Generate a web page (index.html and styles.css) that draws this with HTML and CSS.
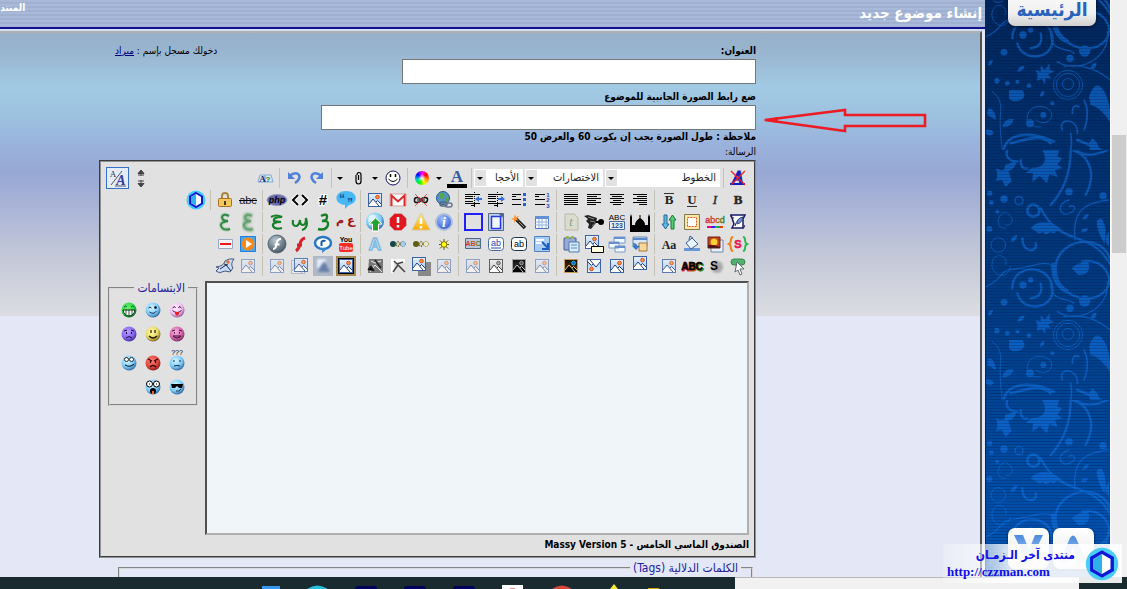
FILE: index.html
```
<!DOCTYPE html>
<html lang="ar" dir="rtl">
<head>
<meta charset="utf-8">
<title>إنشاء موضوع جديد</title>
<link rel="stylesheet" href="styles.css">
</head>
<body>
<svg class="defs" aria-hidden="true">
  <defs>
    <linearGradient id="sky" x1="0" y1="0" x2="0" y2="1"><stop offset="0" stop-color="#e8f2ff"/><stop offset="1" stop-color="#9cc4f4"/></linearGradient>
    <radialGradient id="fBlue" cx=".4" cy=".35" r=".7"><stop offset="0" stop-color="#d8f6ff"/><stop offset=".6" stop-color="#7cccf8"/><stop offset="1" stop-color="#285a98"/></radialGradient>
    <radialGradient id="fGreen" cx=".4" cy=".35" r=".7"><stop offset="0" stop-color="#70f070"/><stop offset=".6" stop-color="#30d848"/><stop offset="1" stop-color="#086018"/></radialGradient>
    <radialGradient id="fPink" cx=".4" cy=".35" r=".7"><stop offset="0" stop-color="#fff0ff"/><stop offset=".6" stop-color="#f4c0f4"/><stop offset="1" stop-color="#884890"/></radialGradient>
    <radialGradient id="fRose" cx=".4" cy=".35" r=".7"><stop offset="0" stop-color="#f8b0e0"/><stop offset=".6" stop-color="#d868b0"/><stop offset="1" stop-color="#702858"/></radialGradient>
    <radialGradient id="fYellow" cx=".4" cy=".35" r=".7"><stop offset="0" stop-color="#fffcb0"/><stop offset=".6" stop-color="#e8d860"/><stop offset="1" stop-color="#685820"/></radialGradient>
    <radialGradient id="fPurple" cx=".4" cy=".35" r=".7"><stop offset="0" stop-color="#b8a0ff"/><stop offset=".6" stop-color="#8868f0"/><stop offset="1" stop-color="#402890"/></radialGradient>
    <radialGradient id="fRed" cx=".4" cy=".35" r=".7"><stop offset="0" stop-color="#ff8070"/><stop offset=".6" stop-color="#e04840"/><stop offset="1" stop-color="#801818"/></radialGradient>
    <radialGradient id="steel" cx=".4" cy=".3" r=".7"><stop offset="0" stop-color="#b8c8d4"/><stop offset="1" stop-color="#485864"/></radialGradient>
    <radialGradient id="info" cx=".4" cy=".3" r=".8"><stop offset="0" stop-color="#a0c0ff"/><stop offset="1" stop-color="#2850d0"/></radialGradient>
    <linearGradient id="warn" x1="0" y1="0" x2="0" y2="1"><stop offset="0" stop-color="#fff080"/><stop offset="1" stop-color="#ffa800"/></linearGradient>
    <linearGradient id="rain"><stop offset="0" stop-color="#e02060"/><stop offset=".5" stop-color="#d85010"/><stop offset="1" stop-color="#209030"/></linearGradient>
    <linearGradient id="btnBlue" x1="0" y1="0" x2="0" y2="1"><stop offset="0" stop-color="#4a8ae0"/><stop offset="1" stop-color="#b4cff0"/></linearGradient>
    <filter id="soft" x="-20%" y="-20%" width="140%" height="140%"><feGaussianBlur stdDeviation="1.3"/></filter>
    <symbol id="pic" viewBox="0 0 20 20">
      <rect x="3.500" y="3.500" width="13" height="13" fill="url(#sky)" stroke="#3c62a8"/>
      <path d="M4 16v-3l4-4 3 3 1.500-1.500 3.500 4V16z" fill="#fff"/><path d="M4 14l4-5 6 7M11 12l1.500-1.500 4 4" fill="none" stroke="#203c78"/>
      <circle cx="12.500" cy="7" r="1.800" fill="#f8a040" stroke="#d04818"/>
    </symbol>
    <symbol id="caret" viewBox="0 0 10 20"><path d="M2 9h6l-3 3z" fill="#000"/></symbol>
    <symbol id="hexa" viewBox="0 0 40 40">
      <circle cx="20" cy="20" r="19" fill="#48ccf8"/><path d="M20 6l12 7v14l-12 7-12-7V13z" fill="#fff" stroke="#1018d8" stroke-width="4"/><path d="M20 8v24l-10-6V14z" fill="#30b0e8"/>
    </symbol>
  </defs>
</svg>

<div class="browser">
  <main class="page">
    <header class="title-bar">
      <h1>إنشاء موضوع جديد</h1>
      <span class="crumb">المنتدى</span>
    </header>
    <div class="panel">
      <form class="form">
        <div class="field-head">
          <label class="strong" for="subject">العنوان:</label>
          <span class="login">دخولك مسجل بإسم : <a href="#user">ميراد</a></span>
        </div>
        <input class="text short" id="subject" type="text">
        <label class="strong second" for="image">ضع رابط الصورة الجانبية للموضوع</label>
        <div class="pointed">
          <input class="text long" id="image" type="text">
          <svg class="pointer" viewBox="0 0 166 26" aria-hidden="true"><path d="M3 13L83 3v5h80v11H83v5z" fill="none" stroke="#ed1c24" stroke-width="2.600"/><path d="M1 13l15-3v6z" fill="#ed1c24"/></svg>
        </div>
        <p class="note">ملاحظة : طول الصورة يجب إن يكوت 60 والعرض 50</p>
        <label class="message" for="body">الرسالة:</label>

        <section class="editor">
          <div class="row">
            <button type="button" class="tool" aria-label="إزالة التنسيق"><svg viewBox="0 0 20 20"><text x="10" y="16" class="g serif bold slant" font-size="18" fill="#1020c0" stroke="#1020c0">A</text><path d="M2 16h15" stroke="#1020c0" stroke-width="2"/><path d="M3 3l14 14M17 3L3 17" stroke="#f02020" stroke-width="1.300"/></svg></button>
            <i class="sep"></i>
            <span class="pick fonts"><select aria-label="الخطوط"><option>الخطوط</option></select></span>
            <span class="pick short-cuts"><select aria-label="الاختصارات"><option>الاختصارات</option></select></span>
            <span class="pick sizes"><select aria-label="الأحجام"><option>الأحجا</option></select></span>
            <i class="sep"></i>
            <button type="button" class="tool" aria-label="لون الخط"><svg viewBox="0 0 20 20"><text x="10" y="14" class="g serif bold" font-size="17" fill="#305a9c">A</text><path d="M0 16h20v4H0z"/></svg></button>
            <button type="button" class="drop" aria-label="الألوان"><svg viewBox="0 0 10 20"><use href="#caret"/></svg></button>
            <button type="button" class="tool" aria-label="ألوان متدرجة"><i class="wheel"></i></button>
            <i class="sep"></i>
            <button type="button" class="tool" aria-label="ابتسامة"><svg viewBox="0 0 20 20"><circle cx="10" cy="10" r="7" fill="#fff" stroke="#101060"/><path d="M7.500 6v3M12.500 6v3" stroke="#000" stroke-width="1.500"/><path d="M5.500 11q4.500 5 9 0" fill="none" stroke="#000"/></svg></button>
            <button type="button" class="drop" aria-label="المزيد من الابتسامات"><svg viewBox="0 0 10 20"><use href="#caret"/></svg></button>
            <button type="button" class="tool" aria-label="مرفق"><svg viewBox="0 0 20 20"><path d="M8 7v6q0 3 2.500 3t2.500-3V7q0-2.500-2-2.500T9 7M10.500 7v5" fill="none" stroke="#000" stroke-width="1.200"/></svg></button>
            <button type="button" class="drop" aria-label="المرفقات"><svg viewBox="0 0 10 20"><use href="#caret"/></svg></button>
            <i class="sep"></i>
            <button type="button" class="tool" aria-label="إعادة"><svg viewBox="0 0 20 20"><path d="M15 8Q8 3 5 7q-2 4 4 8" fill="none" stroke="#5080d8" stroke-width="2.500"/><path d="M16 4v7H9z" fill="#5080d8"/></svg></button>
            <button type="button" class="tool" aria-label="تراجع"><svg viewBox="0 0 20 20"><path d="M5 8q7-5 10-1 2 4-4 8" fill="none" stroke="#5080d8" stroke-width="2.500"/><path d="M4 4v7h7z" fill="#5080d8"/></svg></button>
            <i class="sep"></i>
            <button type="button" class="tool" aria-label="تبديل اللغة"><svg viewBox="0 0 20 20"><path d="M3 14l2-7h5v7zM10 7h6l2 7h-8z" fill="#d8e8f8" stroke="#88a8d0"/><text x="7.500" y="14" class="g serif bold" font-size="9" fill="#202870">A</text><text x="13" y="14" class="g bold" font-size="8" fill="#208030">?</text></svg></button>
            <span class="push"></span>
            <button type="button" class="tool" aria-label="حجم الصندوق"><svg viewBox="0 0 20 20"><path d="M10 2l3 3.500H7zM7 7h6M10 5v3M10 19l3-3.500H7zM7 13h6M10 12v4" stroke="#444" fill="#444"/></svg></button>
            <button type="button" class="tool mode" aria-label="تبديل المحرر"><svg viewBox="0 0 20 20"><text x="5" y="9" class="g serif" font-size="9" fill="#333">A</text><text x="13" y="17" class="g serif bold slant" font-size="14" fill="#3838a0">A</text><path d="M3 17L14 3M7 18h11" stroke="#556"/></svg></button>
          </div>

          <div class="row">
            <button type="button" class="tool" aria-label="غامق"><svg viewBox="0 0 20 20"><text x="10" y="14" class="g serif bold" font-size="13" fill="#222" stroke="#333" stroke-width=".5">B</text></svg></button>
            <button type="button" class="tool" aria-label="مائل"><svg viewBox="0 0 20 20"><text x="10" y="14" class="g serif slant" font-size="13" fill="#222" stroke="#333" stroke-width=".4">I</text></svg></button>
            <button type="button" class="tool" aria-label="تحته خط"><svg viewBox="0 0 20 20"><text x="10" y="14" class="g serif bold" font-size="13" fill="#222">U</text><path d="M5 16.500h10" stroke="#333"/></svg></button>
            <button type="button" class="tool" aria-label="فوقه خط"><svg viewBox="0 0 20 20"><text x="10" y="14" class="g serif bold" font-size="13" fill="#222">B</text><path d="M5 3.500h10" stroke="#333"/></svg></button>
            <i class="sep"></i>
            <button type="button" class="tool" aria-label="محاذاة لليمين"><svg viewBox="0 0 20 20"><path d="M3 4.500h14M7 6.500h10M3 8.500h14M7 10.500h10M3 12.500h14M9 14.500h8" stroke="#000"/></svg></button>
            <button type="button" class="tool" aria-label="توسيط"><svg viewBox="0 0 20 20"><path d="M3 4.500h14M5 6.500h10M3 8.500h14M6 10.500h8M3 12.500h14M6 14.500h8" stroke="#000"/></svg></button>
            <button type="button" class="tool" aria-label="محاذاة لليسار"><svg viewBox="0 0 20 20"><path d="M3 4.500h14M3 6.500h10M3 8.500h14M3 10.500h9M3 12.500h14M3 14.500h9" stroke="#000"/></svg></button>
            <button type="button" class="tool" aria-label="ضبط"><svg viewBox="0 0 20 20"><path d="M3 4.500h14M3 6.500h14M3 8.500h14M3 10.500h14M3 12.500h14M3 14.500h14" stroke="#000"/></svg></button>
            <i class="sep"></i>
            <button type="button" class="tool" aria-label="قائمة مرقمة"><svg viewBox="0 0 20 20"><path d="M3 4.500h10M3 9.500h10M3 14.500h10M3 6.500h4" stroke="#000"/><text x="16" y="7" class="g bold" font-size="6" fill="#1848c0">1</text><text x="16" y="12" class="g bold" font-size="6" fill="#1848c0">2</text><text x="16" y="18" class="g bold" font-size="6" fill="#1848c0">3</text></svg></button>
            <button type="button" class="tool" aria-label="قائمة نقطية"><svg viewBox="0 0 20 20"><path d="M3 4.500h9M3 9.500h9M3 14.500h9M3 6.500h4" stroke="#000"/><path d="M14 3h3v3h-3zM14 8h3v3h-3zM14 13h3v3h-3z" fill="#2860d0"/></svg></button>
            <button type="button" class="tool" aria-label="زيادة المسافة"><svg viewBox="0 0 20 20"><path d="M2 4.500h15M2 6.500h8M2 8.500h8M2 11.500h8M2 13.500h15M8 15.500h4" stroke="#000"/><path d="M11.500 2v16" stroke="#000" stroke-dasharray="1 1"/><path d="M12 8h3V6l4 3-4 3v-2h-3z" fill="#3870d8"/></svg></button>
            <button type="button" class="tool" aria-label="إنقاص المسافة"><svg viewBox="0 0 20 20"><path d="M2 4.500h15M2 6.500h8M2 8.500h8M2 11.500h8M2 13.500h15M8 15.500h4" stroke="#000"/><path d="M11.500 2v16" stroke="#000" stroke-dasharray="1 1"/><path d="M19 8h-3V6l-4 3 4 3v-2h3z" fill="#3870d8"/></svg></button>
            <i class="sep"></i>
            <button type="button" class="tool" aria-label="رابط"><svg viewBox="0 0 20 20"><circle cx="9" cy="8" r="6.500" fill="#5890c8" stroke="#285890"/><path d="M5 4q4-3 6 1l-2 4-4-1zM11 8l4-1-1 5-3-1z" fill="#50a850"/><rect x="6" y="12" width="7" height="4" rx="2" fill="none" stroke="#506880" stroke-width="1.500"/><rect x="11" y="13" width="7" height="4" rx="2" fill="none" stroke="#687890" stroke-width="1.500"/></svg></button>
            <button type="button" class="tool" aria-label="إزالة الرابط"><svg viewBox="0 0 20 20"><path d="M3.500 10q0-2.500 2.500-2.500T10 10q1-2.500 4-2.500t2.500 2.500-2.500 2.500T10 10q-1 2.500-4 2.500T3.500 10z" fill="none" stroke="#111" stroke-width="1.500"/><path d="M6 10h8" stroke="#000"/><path d="M4 4l12 12M16 4L4 16" stroke="#f03030" stroke-width=".8"/></svg></button>
            <button type="button" class="tool" aria-label="بريد"><svg viewBox="0 0 20 20"><path d="M2 4h16v12H2z" fill="#fff" stroke="#d8a0a0"/><path d="M3.500 16V5.500l6.500 6 6.500-6V16" fill="none" stroke="#e02828" stroke-width="2"/></svg></button>
            <button type="button" class="tool" aria-label="صورة"><svg viewBox="0 0 20 20"><use href="#pic"/></svg></button>
            <i class="sep"></i>
            <button type="button" class="tool" aria-label="اقتباس"><svg viewBox="0 0 20 20"><path d="M10 1c12 0 13 12 3 14l-4 4v-4C-3 14-2 1 10 1z" fill="#48b8f4"/><text x="6" y="13" class="g bold" font-size="12" fill="#0850a0">“</text><text x="14" y="17" class="g bold" font-size="12" fill="#0850a0">”</text></svg></button>
            <button type="button" class="tool" aria-label="كود"><svg viewBox="0 0 20 20"><text x="10" y="15" class="g bold" font-size="15" stroke="#fff" stroke-width="2" paint-order="stroke">#</text></svg></button>
            <button type="button" class="tool" aria-label="HTML"><svg viewBox="0 0 20 20"><path d="M8 5l-5 5 5 5M12 5l5 5-5 5" fill="none" stroke="#fff" stroke-width="4"/><path d="M8 5l-5 5 5 5M12 5l5 5-5 5" fill="none" stroke="#000" stroke-width="2"/></svg></button>
            <button type="button" class="tool" aria-label="PHP"><svg viewBox="0 0 20 20"><ellipse cx="10" cy="10" rx="10" ry="5.500" fill="#6868a8" stroke="#9898c0"/><text x="10" y="13" class="g bold slant" font-size="9">php</text></svg></button>
            <i class="sep"></i>
            <button type="button" class="tool" aria-label="يتوسطه خط"><svg viewBox="0 0 20 20"><text x="10" y="14" class="g" font-size="11" fill="#222">abc</text><path d="M1 10.500h18" stroke="#000"/></svg></button>
            <button type="button" class="tool" aria-label="قفل"><svg viewBox="0 0 20 20"><path d="M7 9V6q0-3 3-3t3 3v3" fill="none" stroke="#a88840" stroke-width="2"/><rect x="3.500" y="8.500" width="13" height="8" rx="1" fill="#f4c860" stroke="#a87020"/><path d="M10 11v4" stroke="#503808" stroke-width="2"/></svg></button>
            <i class="sep"></i>
            <button type="button" class="tool" aria-label="الموقع"><svg viewBox="0 0 20 20"><use href="#hexa"/></svg></button>
          </div>

          <div class="row">
            <button type="button" class="tool" aria-label="توقيع"><svg viewBox="0 0 20 20"><path d="M3 3h14l-2 4v9H4l2-4z" fill="#fff" stroke="#181868" stroke-width="1.500"/><path d="M3 3q-1 3 3 3M15 16q3-1 1-3M16 5q-7 1-9 9" stroke="#181868" fill="none"/><path d="M15 5q-6 1-6 7 5-1 6-7z" fill="#7890c8" stroke="#304888"/></svg></button>
            <button type="button" class="tool" aria-label="نص ملون"><svg viewBox="0 0 20 20"><text x="10" y="11" class="g" font-size="9" fill="url(#rain)" stroke="url(#rain)" stroke-width=".4">abcd</text><path d="M2 14h4v2H2z" fill="#e00080"/><path d="M6 14h4v2H6z" fill="#3020f0"/><path d="M10 14h4v2h-4z" fill="#10b060"/><path d="M14 14h4v2h-4z" fill="#f04000"/></svg></button>
            <button type="button" class="tool" aria-label="إطار"><svg viewBox="0 0 20 20"><path d="M2.500 2.500h15v15h-15z" fill="#f8e8a8" stroke="#807848"/><path d="M5.500 5.500h9v9h-9z" fill="#fff" stroke="#e05818" stroke-dasharray="2 1"/></svg></button>
            <button type="button" class="tool" aria-label="اتجاه"><svg viewBox="0 0 20 20"><path d="M5 3h3v9h2l-3.500 5L3 12h2z" fill="#60b8e0" stroke="#286898"/><path d="M12 17h3V8h2l-3.500-5L10 8h2z" fill="#50d070" stroke="#187838"/></svg></button>
            <i class="sep"></i>
            <button type="button" class="tool" aria-label="إسلاميات"><svg viewBox="0 0 20 20"><path d="M0 20V5l1-3 1 3v8h3q0-4 5-7 5 3 5 7h3V5l1-3 1 3v15z"/><path d="M10 3v4" stroke="#000"/></svg></button>
            <button type="button" class="tool" aria-label="عداد"><svg viewBox="0 0 20 20"><text x="10" y="8" class="g" font-size="8">ABC</text><path d="M2.500 9.500h15v8h-15z" fill="#e8f0ff" stroke="#486898"/><text x="10" y="16" class="g bold" font-size="7" fill="#304880">123</text></svg></button>
            <button type="button" class="tool" aria-label="زخرفة"><svg viewBox="0 0 20 20"><path d="M0 4l4-1 9 3-1 5-5 6-3-1 1-4-3-3 2-2z" fill="#222"/><path d="M4 5l6 2M6 9l5 1M8 14l4-3" stroke="#888"/><path d="M12 10h3" stroke="#000" stroke-width="2"/><circle cx="17" cy="10" r="3"/></svg></button>
            <button type="button" class="tool" aria-label="ورقة"><svg viewBox="0 0 20 20"><path d="M4 2h9l4 4v12H4z" fill="#dcdccc" stroke="#b8b8a8"/><text x="10" y="14" class="g serif slant" font-size="12" fill="#70a098">t</text></svg></button>
            <i class="sep"></i>
            <button type="button" class="tool" aria-label="جدول"><svg viewBox="0 0 20 20"><path d="M3.500 4.500h13v12h-13z" fill="#fff" stroke="#4878c0"/><path d="M3 4h14v3H3z" fill="#6090d8"/><path d="M3 10h14M3 13h14M7 7v9M10 7v9M14 7v9" stroke="#90b0e0"/></svg></button>
            <button type="button" class="tool" aria-label="معالج"><svg viewBox="0 0 20 20"><path d="M7 7l9 9" stroke="#222" stroke-width="3.500"/><path d="M10 10l5 5" stroke="#b09878"/><path d="M6 2l1 3 3-1-2 3 2 2-3-1-2 3V8L2 7l3-1z" fill="#ff9030"/></svg></button>
            <button type="button" class="tool" aria-label="صفحة"><svg viewBox="0 0 20 20"><path d="M2.500 1.500h15v17h-15z" fill="#c0d4e8" stroke="#506880"/><path d="M5.500 4.500h9v12h-9z" fill="#eef6ff" stroke="#2838f0" stroke-width="1.500"/><path d="M13 2h5l-2 4z" fill="#506890"/></svg></button>
            <button type="button" class="tool" aria-label="مربع"><svg viewBox="0 0 20 20"><path d="M2 2h17v16H2z" fill="none" stroke="#2020f8" stroke-width="2"/></svg></button>
            <i class="sep"></i>
            <button type="button" class="tool" aria-label="معلومة"><svg viewBox="0 0 20 20"><circle cx="10" cy="10" r="8" fill="url(#info)" stroke="#b0c0d8" stroke-width="2"/><text x="10" y="15" class="g serif bold slant" font-size="14" fill="#fff">i</text></svg></button>
            <button type="button" class="tool" aria-label="تحذير"><svg viewBox="0 0 20 20"><path d="M10 1l9 17H1z" fill="url(#warn)" stroke="#d8c8a0"/><path d="M10 6v6M10 14v2.500" stroke="#fff" stroke-width="2.500"/></svg></button>
            <button type="button" class="tool" aria-label="ممنوع"><svg viewBox="0 0 20 20"><path d="M6.500 1.500h7l5 5v7l-5 5h-7l-5-5v-7z" fill="#e01820" stroke="#d8a8a8"/><path d="M10 5v6M10 13v2.500" stroke="#fff" stroke-width="2.500"/></svg></button>
            <button type="button" class="tool" aria-label="رفع"><svg viewBox="0 0 20 20"><circle cx="10" cy="9.500" r="9" fill="url(#fBlue)"/><path d="M4 4q4-3 7 0l-3 4-5 2z" fill="#e0f4ff"/><path d="M10.500 6l6.500 6h-3.500v7H7.500v-7H4z" fill="#28a030" stroke="#fff"/></svg></button>
            <i class="sep"></i>
            <button type="button" class="tool" aria-label="لون الحرف"><svg viewBox="0 0 20 20"><text x="15" y="12" class="g bold" font-size="12" fill="#a01010">ع</text><text x="4" y="12" class="g bold" font-size="11" fill="#a01010">م</text></svg></button>
            <button type="button" class="tool" aria-label="زخرفة الواو"><svg viewBox="0 0 20 20"><path d="M8 4q6-3 6 1t-5 4q7-1 6 4-2 6-10 4" fill="none" stroke="#188028" stroke-width="2.400"/></svg></button>
            <button type="button" class="tool" aria-label="زخرفة السين"><svg viewBox="0 0 20 20"><path d="M3 8q-1 6 3 6 3 0 4-6 0 5 3 5t3-7q3 10-4 12" fill="none" stroke="#188028" stroke-width="2.200"/></svg></button>
            <button type="button" class="tool" aria-label="زخرفة الحاء"><svg viewBox="0 0 20 20"><path d="M4 5q5-3 11 0-9 0-8 4l7 1Q5 10 6 14q2 4 9 2" fill="none" stroke="#188028" stroke-width="2.200"/></svg></button>
            <i class="sep"></i>
            <button type="button" class="tool" aria-label="ظل الحرف"><svg viewBox="0 0 20 20"><path d="M14 4q-6-3-7 1 0 4 6 4-8 1-7 5 2 5 9 3" fill="none" stroke="#80b088" stroke-width="4" filter="url(#soft)"/><path d="M14 4q-6-3-7 1 0 4 6 4-8 1-7 5 2 5 9 3" fill="none" stroke="#509860" stroke-width="2" opacity=".6"/></svg></button>
            <button type="button" class="tool" aria-label="توهج الحرف"><svg viewBox="0 0 20 20"><path d="M14 4q-6-3-7 1 0 4 6 4-8 1-7 5 2 5 9 3" fill="none" stroke="#b8d0b8" stroke-width="4"/><path d="M14 4q-6-3-7 1 0 4 6 4-8 1-7 5 2 5 9 3" fill="none" stroke="#308848" stroke-width="2"/></svg></button>
          </div>

          <div class="row">
            <button type="button" class="tool" aria-label="مخفي"><svg viewBox="0 0 20 20"><text x="10" y="14" class="g bold" font-size="11" fill="#e81850" stroke="#e81850" stroke-width=".5">S</text><path d="M5 3Q3 3 3 6t-2 4q2 1 2 4t2 3" fill="none" stroke="#f08020" stroke-width="2"/><path d="M15 3q2 0 2 3t2 4q-2 1-2 4t-2 3" fill="none" stroke="#30b850" stroke-width="2"/></svg></button>
            <button type="button" class="tool" aria-label="ألبوم"><svg viewBox="0 0 20 20"><path d="M6 6h12v12H6z" fill="#e8f0fa" stroke="#7088a8"/><path d="M3 3h12v11H3z" fill="#c04020" stroke="#702010"/><circle cx="9" cy="8" r="3.500" fill="#f8d030"/><path d="M3 11h6l6 2v1H3z" fill="#501818"/></svg></button>
            <button type="button" class="tool" aria-label="تعبئة"><svg viewBox="0 0 20 20"><path d="M2 14h16v3H2z" fill="#6898d8"/><path d="M4 9l6-5 6 6-7 5z" fill="#e8f4ff" stroke="#386090"/><path d="M7 6l1-4 3 2" fill="none" stroke="#386090"/></svg></button>
            <button type="button" class="tool" aria-label="حالة الأحرف"><svg viewBox="0 0 20 20"><text x="10" y="15" class="g serif bold" font-size="12" fill="#222">Aa</text></svg></button>
            <i class="sep"></i>
            <button type="button" class="tool" aria-label="لفافة"><svg viewBox="0 0 20 20"><path d="M3 3h14v9H3z" fill="#d8e8fa" stroke="#6888b0"/><path d="M3 4h14v2H3z" fill="#5888c8"/><path d="M9 9h8v8H9z" fill="#f8d898" stroke="#a87840"/><path d="M3 9q4 0 4 3h3l-4 4-4-4h2q0-1-1-2z" fill="#3878c8"/></svg></button>
            <button type="button" class="tool" aria-label="نوافذ"><svg viewBox="0 0 20 20"><g fill="#f4f8ff" stroke="#7898c8"><path d="M7 3h11v6H7zM2 8h10v6H2zM8 12h10v6H8z"/></g><path d="M7 3h11v2H7zM2 8h10v2H2zM8 12h10v2H8z" fill="#6890d0"/></svg></button>
            <button type="button" class="tool" aria-label="تعليق الصورة"><svg viewBox="0 0 20 20"><use href="#pic" x="-2" y="-2"/><path d="M7.500 12.500h12v6h-12z" fill="#fffce0" stroke="#000"/></svg></button>
            <button type="button" class="tool" aria-label="لصق"><svg viewBox="0 0 20 20"><path d="M3 4h12v12H3z" fill="#98a8d8" stroke="#486098"/><path d="M5 2h3v3H5zM10 2h3v3h-3z" fill="#90b858"/><path d="M8 8h10v10H8z" fill="#d8ecff" stroke="#5078a8"/><path d="M10 11h6M10 14h6" stroke="#5088c8"/></svg></button>
            <i class="sep"></i>
            <button type="button" class="tool" aria-label="ملء"><svg viewBox="0 0 20 20"><path d="M2.500 2.500h15v15h-15z" fill="#a8ccf4" stroke="#5080c0"/><path d="M4 5h8v2H4zM4 8h6v2H4z" fill="#fff"/><path d="M10 8l6 6m0-5v6h-6" fill="none" stroke="#1860c0" stroke-width="2"/></svg></button>
            <button type="button" class="tool" aria-label="زر نص"><svg viewBox="0 0 20 20"><rect x="2.500" y="3.500" width="15" height="13" rx="3" fill="#fff" stroke="#18304c"/><text x="10" y="13" class="g" font-size="9">ab</text></svg></button>
            <button type="button" class="tool" aria-label="زر رابط"><svg viewBox="0 0 20 20"><rect x="2.500" y="3.500" width="15" height="13" rx="3" fill="#fff" stroke="#4868a4"/><text x="10" y="12" class="g" font-size="9" fill="#2848b8">ab</text><path d="M5 14h10" stroke="#2848b8"/></svg></button>
            <button type="button" class="tool" aria-label="نص متدرج"><svg viewBox="0 0 20 20"><path d="M2.500 4.500h15v10h-15z" fill="#b8c8d8" stroke="#50688c"/><text x="10" y="12" class="g bold" font-size="7" fill="url(#rain)">ABC</text></svg></button>
            <i class="sep"></i>
            <button type="button" class="tool" aria-label="إضاءة"><svg viewBox="0 0 20 20"><path d="M10 5v11M5 10.500h10M6 6.500l8 8M14 6.500l-8 8" stroke="#706000"/><circle cx="10" cy="10.500" r="2.800" fill="#ffff00" stroke="#807000"/></svg></button>
            <button type="button" class="tool" aria-label="تلاشي أصفر"><svg viewBox="0 0 20 20"><circle cx="5" cy="10" r="3" fill="#605c10"/><circle cx="10" cy="10" r="2" fill="none" stroke="#706820" stroke-width="2" stroke-dasharray="1 1"/><circle cx="15" cy="10" r="2.500" fill="#ececc8" stroke="#808030" stroke-dasharray="1 1"/></svg></button>
            <button type="button" class="tool" aria-label="تلاشي أزرق"><svg viewBox="0 0 20 20"><circle cx="5" cy="10" r="3" fill="#104848"/><circle cx="10" cy="10" r="2" fill="none" stroke="#706820" stroke-width="2" stroke-dasharray="1 1"/><circle cx="15" cy="10" r="2.500" fill="#a8d0f0" stroke="#507080" stroke-dasharray="1 1"/></svg></button>
            <button type="button" class="tool" aria-label="توهج النص"><svg viewBox="0 0 20 20"><text x="10" y="16" class="g bold" font-size="17" fill="#e8f8ff" stroke="#80b8e0" stroke-width="1.500">A</text></svg></button>
            <i class="sep"></i>
            <button type="button" class="tool" aria-label="يوتيوب"><svg viewBox="0 0 20 20"><text x="10" y="8" class="g bold" font-size="7">You</text><rect x="3" y="9" width="14" height="9" rx="2" fill="#f03028"/><text x="10" y="16" class="g" font-size="6" fill="#fff">Tube</text></svg></button>
            <button type="button" class="tool" aria-label="ريل بلاير"><svg viewBox="0 0 20 20"><ellipse cx="10" cy="9" rx="8" ry="6" fill="#fff" stroke="#2878c4" stroke-width="2.500"/><path d="M6 14q4 1 3 5 5-3 3-5" fill="#3888d0"/><path d="M8.500 12V8q1-2 4-1" fill="none" stroke="#1858a8" stroke-width="2"/></svg></button>
            <button type="button" class="tool" aria-label="فلاش"><svg viewBox="0 0 20 20"><path d="M15 4q-4 1-5 6t-4 7M7 11h5" fill="none" stroke="#d82028" stroke-width="3"/></svg></button>
            <button type="button" class="tool" aria-label="مشغل فلاش"><svg viewBox="0 0 20 20"><circle cx="10" cy="10" r="9" fill="url(#steel)" stroke="#586874"/><path d="M14 5q-4 0-4.500 5T6 15M7.500 10.500h5" fill="none" stroke="#fff" stroke-width="2"/></svg></button>
            <i class="sep"></i>
            <button type="button" class="tool" aria-label="فيديو"><svg viewBox="0 0 20 20"><path d="M2.500 2.500h15v15h-15z" fill="#50a8e8" stroke="#1880e0"/><circle cx="10" cy="10" r="6.500" fill="#f88818"/><path d="M8 6l6 4-6 4z" fill="#fff"/></svg></button>
            <button type="button" class="tool" aria-label="خط فاصل"><svg viewBox="0 0 20 20"><path d="M3.500 5.500h14v9h-14z" fill="#f4f4f8" stroke="#98a8c0"/><path d="M5 10h11" stroke="#f01818" stroke-width="2"/></svg></button>
          </div>

          <div class="row">
            <button type="button" class="tool" aria-label="زر"><svg viewBox="0 0 20 20"><rect x="3" y="3" width="14" height="6" rx="3" fill="#50b070" stroke="#388850"/><path d="M9 6l7 7h-4l2 5-2 1-2-5-3 2z" fill="#fff" stroke="#606870"/></svg></button>
            <button type="button" class="tool" aria-label="ظل النص"><svg viewBox="0 0 20 20"><circle cx="12" cy="11" r="6" fill="#a8a8a8" filter="url(#soft)"/><text x="9" y="14" class="g bold" font-size="12">S</text></svg></button>
            <button type="button" class="tool" aria-label="حدود النص"><svg viewBox="0 0 20 20"><text x="11" y="15" class="g bold" font-size="10" fill="url(#rain)" stroke="url(#rain)">ABC</text><text x="10" y="14" class="g bold" font-size="10" stroke="#000" stroke-width=".5">ABC</text></svg></button>
            <button type="button" class="tool" aria-label="صورة عادية"><svg viewBox="0 0 20 20"><use href="#pic" opacity=".8"/></svg></button>
            <i class="sep"></i>
            <button type="button" class="tool" aria-label="صورة أعلى"><svg viewBox="0 0 20 20"><use href="#pic" y="-3"/></svg></button>
            <button type="button" class="tool" aria-label="صورة أسفل"><svg viewBox="0 0 20 20"><use href="#pic"/></svg></button>
            <button type="button" class="tool" aria-label="قلب الصورة"><svg viewBox="0 0 20 20"><use href="#pic" transform="rotate(180 10 10)"/></svg></button>
            <button type="button" class="tool negative" aria-label="عكس الألوان"><svg viewBox="0 0 20 20"><use href="#pic"/></svg></button>
            <i class="sep"></i>
            <button type="button" class="tool faded" aria-label="شفافية"><svg viewBox="0 0 20 20"><use href="#pic"/></svg></button>
            <button type="button" class="tool dark" aria-label="أسود"><svg viewBox="0 0 20 20"><use href="#pic"/></svg></button>
            <button type="button" class="tool gray" aria-label="رمادي"><svg viewBox="0 0 20 20"><use href="#pic"/></svg></button>
            <button type="button" class="tool faded" aria-label="شفافية جزئية"><svg viewBox="0 0 20 20"><use href="#pic"/></svg></button>
            <i class="sep"></i>
            <button type="button" class="tool faded" aria-label="تلاشي الصورة"><svg viewBox="0 0 20 20"><use href="#pic"/></svg></button>
            <button type="button" class="tool" aria-label="ظل الصورة"><svg viewBox="0 0 20 20"><path d="M7 6h13v14H7z" fill="#888"/><use href="#pic" x="-2" y="-2"/></svg></button>
            <button type="button" class="tool gray" aria-label="نقش"><svg viewBox="0 0 20 20"><path d="M3 3h14v3H6v11H3z" fill="#fff"/><path d="M5 16l5-7 7 7M6 5l3 3 6-2" fill="none" stroke="#444" stroke-width="1.500"/></svg></button>
            <button type="button" class="tool gray" aria-label="أشعة"><svg viewBox="0 0 20 20"><path d="M4 3h14v14H3z" fill="#777"/><path d="M5 16l5-7 7 7M6 5l4 2 6-2M5 10h3" fill="none" stroke="#eee"/><path d="M3 14l3-4 3 5M10 4l6 8" stroke="#222" stroke-width="1.500"/></svg></button>
            <i class="sep"></i>
            <button type="button" class="tool" aria-label="إطار الصورة"><svg viewBox="0 0 20 20"><path d="M1 1h18v18H1z" fill="#000" stroke="#a08850" stroke-width="2"/><use href="#pic"/></svg></button>
            <button type="button" class="tool" aria-label="تمويه"><svg viewBox="0 0 20 20"><path d="M0 0h20v20H0z" fill="#b0b8c8"/><path d="M4 3h9v9H4z" fill="#e4ecf8" filter="url(#soft)"/><path d="M8 9l4-4 3 7 2 4H5z" fill="#6880a8" filter="url(#soft)"/></svg></button>
            <button type="button" class="tool" aria-label="حركة"><svg viewBox="0 0 20 20"><use href="#pic" x="-2" y="1" opacity=".3"/><use href="#pic" x="1" y="-1" opacity=".8"/></svg></button>
            <button type="button" class="tool faded" aria-label="تلاشي خطي"><svg viewBox="0 0 20 20"><use href="#pic"/></svg></button>
            <i class="sep"></i>
            <button type="button" class="tool faded" aria-label="تلاشي جانبي"><svg viewBox="0 0 20 20"><use href="#pic"/></svg></button>
            <button type="button" class="tool" aria-label="تموج"><svg viewBox="0 0 20 20"><path d="M1 11q8-1 9-6 4-3 9-2-4 5-1 9l-3 4q-6-2-8 0t-6-1l3-3z" fill="#c8dcf8" stroke="#485878"/><path d="M5 13l6-4 5 6M9 8l4 1" fill="none" stroke="#182848"/><circle cx="13" cy="6" r="1.700" fill="#e07030"/></svg></button>
          </div>

          <div class="work">
            <textarea id="body"></textarea>
            <fieldset class="smilies">
              <legend>الابتسامات</legend>
              <div class="faces">
                <button type="button" aria-label="لسان"><svg viewBox="0 0 16 16"><circle cx="8" cy="8" r="7.500" fill="url(#fPink)"/><path d="M3.500 6l2-1.500 1 1.500M9.500 6l1-1.500 2 1.500M3.500 8.500q4.500 4 9 0" fill="none" stroke="#401838"/><path d="M6 10h4v2l-2 2-2-2z" fill="#f02020"/></svg></button>
                <button type="button" aria-label="غمزة"><svg viewBox="0 0 16 16"><circle cx="8" cy="8" r="7.500" fill="url(#fBlue)"/><path d="M3.500 6l1.500-1 1.500 1M4.500 10q4 3 7-1" fill="none" stroke="#102850"/><circle cx="10.500" cy="5.500" r="1.300"/></svg></button>
                <button type="button" aria-label="ضحكة كبيرة"><svg viewBox="0 0 16 16"><circle cx="8" cy="8" r="7.500" fill="url(#fGreen)"/><path d="M3 5q2-2 3 0M10 5q2-2 3 0" fill="none" stroke="#063"/><path d="M2 8h12q-1 6-6 6T2 8z" fill="#fff" stroke="#043010"/><path d="M5 8v5M8 8v6M11 8v5" stroke="#043010" stroke-width=".8"/></svg></button>
                <button type="button" aria-label="خجل"><svg viewBox="0 0 16 16"><circle cx="8" cy="8" r="7.500" fill="url(#fRose)"/><path d="M3 5l3-1M13 5l-3-1M5.500 6v1.500M10.500 6v1.500M4 10h8q-4 4-8 0" fill="none" stroke="#401030"/></svg></button>
                <button type="button" aria-label="ابتسامة"><svg viewBox="0 0 16 16"><circle cx="8" cy="8" r="7.500" fill="url(#fYellow)"/><path d="M6 4v3M10 4v3M4 10q4 4 8 0" fill="none" stroke="#201800" stroke-width="1.200"/></svg></button>
                <button type="button" aria-label="حزين"><svg viewBox="0 0 16 16"><circle cx="8" cy="8" r="7.500" fill="url(#fPurple)"/><path d="M3 5l3-1M13 5l-3-1M5.500 6v2M10.500 6v2M5 12q3-3 6 0" fill="none" stroke="#180840"/></svg></button>
                <button type="button" class="tall" aria-label="حائر"><svg viewBox="0 0 16 21"><text x="8" y="5" class="g" font-size="7">???</text><circle cx="8" cy="13" r="7.500" fill="url(#fBlue)"/><path d="M4 11h2M10 11h2M5 16q3-1 6 0" fill="none" stroke="#102850" stroke-width="1.200"/></svg></button>
                <button type="button" aria-label="غاضب"><svg viewBox="0 0 16 16"><circle cx="8" cy="8" r="7.500" fill="url(#fRed)"/><path d="M3 4l4 2M13 4L9 6M5.500 6v2M10.500 6v2M5 12q3-3 6 0" fill="none" stroke="#300" stroke-width="1.200"/></svg></button>
                <button type="button" aria-label="متأمل"><svg viewBox="0 0 16 16"><circle cx="8" cy="8" r="7.500" fill="url(#fBlue)"/><circle cx="5.500" cy="4.500" r="2" fill="#fff" stroke="#000" stroke-width=".8"/><circle cx="10.500" cy="4.500" r="2" fill="#fff" stroke="#000" stroke-width=".8"/><path d="M4 10q5 3 9-1" fill="none" stroke="#000"/></svg></button>
                <button type="button" aria-label="نظارة"><svg viewBox="0 0 16 16"><circle cx="8" cy="8" r="7.500" fill="url(#fBlue)"/><path d="M2 5h12l-1 4h-3L8 7 6 9H3z"/><path d="M7 12q3 1 5-2" fill="none" stroke="#234"/></svg></button>
                <button type="button" aria-label="مصدوم"><svg viewBox="0 0 16 16"><circle cx="8" cy="8" r="7.500" fill="url(#fBlue)"/><circle cx="4.500" cy="5" r="3" fill="#fff" stroke="#000"/><circle cx="11.500" cy="5" r="3" fill="#fff" stroke="#000"/><path d="M4 5h1M11 5h1" stroke="#000"/><circle cx="8" cy="12" r="3" fill="#000"/><path d="M7 12h2v3H7z" fill="#f06020"/></svg></button>
              </div>
            </fieldset>
          </div>
          <p class="version">الصندوق الماسي الخامس - Massy Version 5</p>
        </section>

        <fieldset class="tags"><legend>الكلمات الدلالية (Tags)</legend></fieldset>
      </form>
    </div>
  </main>

  <aside class="side">
    <svg class="ornament" aria-hidden="true">
      <defs>
        <pattern id="vines" width="125" height="250" patternUnits="userSpaceOnUse" patternTransform="translate(0 150)">
          <g transform="scale(.3333) translate(-76 0)" fill="none" stroke="#1478ea" stroke-width="6" stroke-linecap="round">
            <path d="M330 0q0 100-60 165M335 0c60 20 70 80 40 135M345 0q40 30 105-5M450 330c-30-90-160-60-165 20s90 120 140 80 0-110-60-95M240 175c60 120 150 60 210 170" stroke-width="7"/>
            <path d="M278 345q0 60 40 78" stroke-width="13"/>
            <path d="M155 415c0-75 110-75 120-5s-90 80-105 20M240 400q10 40-30 45" stroke-width="7"/>
            <path d="M270 400c0 60 50 40 70 60M290 485c60 40 160-10 150-90M310 500q70-15 140 40M76 410c50-20 40-50 80-52s100-30 120-10" stroke-width="4"/>
            <path d="M150 350c-15 50-65 20-55-15s50-15 40 10M135 235c-40 5-20-60 5-45s15 40-5 35" stroke-width="3"/>
            <path d="M325 150c-40 10-30 50 0 40s15-30 0-20M343 270c-10-100 40-110 100-120" stroke-width="4"/>
            <circle cx="175" cy="152" r="12" stroke-width="4"/><circle cx="218" cy="182" r="18" stroke-width="8"/><circle cx="113" cy="285" r="22" stroke-width="3"/>
            <path d="M185 265c0 50 50 40 40 15" stroke-width="7"/>
            <g stroke-width="3"><circle cx="322" cy="555" r="44"/><circle cx="322" cy="555" r="35"/><circle cx="322" cy="552" r="17"/><path d="M240 680c-60 10-50-70 5-60s20 70-20 40M95 575q30 20 25 60t5 115"/></g>
            <path d="M305 690c-15-40 50-35 45 10M330 700q5 30 0 50M370 600q20 40 0 90M335 640q0-30 20-20" stroke-width="5"/>
            <path d="M130 745c15-50 90-50 150-20M150 730c40-10 90-30 120 0M350 720q50 20 70 30" stroke-width="8"/>
            <path d="M140 0q-10 30 30 35M180 30q0 30 20 25" stroke-width="7"/>
            <g fill="#1478ea" stroke="none">
              <path d="M245 0h50l-5 20 15 5-15 18 15 12-22 6 8 20-25-8-7 27-22-22-22 18 2-27-22 0 18-16c35 2 50-18 32-53z"/>
              <path d="M105 55q30 15 28-10l35-12q-5 25-25 30l10 30-18 18-12-22-18 5q10-20 0-39z"/>
              <path d="M210 235q20-25 60-15 30 10 40 30-20-10-25-5-5 10-15 0-20 15-22 0-15 10-20 0zM333 355q20-20 50-20 10 40-30 40z"/>
              <path d="M408 215q5-10 15-10 20 35 8 75-20-30-23-65zM445 290q-20-20 0-45zM145 570h40q15 20-5 30-25 10-35-5zM385 590q15-45 35-30 30 30 30 110-30-50-60-55z"/>
              <path d="M225 510l15 5 0-20 12 15 15-20 0 20 15 5-20 8 10 14-17-3-2 18-10-15-15 5 3-15zM385 730l10-15 15 15 8 20h-30z"/>
              <path d="M150 275q5-20 20-20-2 22-20 20zM365 210q5-20 20-17-5 17-20 17zM360 245q5-12 22-10-5 17-22 10zM80 645q0-30 15-15 12 15 10 30zM125 682q5-28 34-25-5 25-34 25zM76 690q15-5 24 8-10 15-24 3zM170 515q5-20 22-17-5 18-22 17zM390 505q5-20 18-15-2 20-18 15zM103 535q10-5 15 8-10 15-17 3zM238 590q0-15 12-18 5 15-12 18zM82 495q0-15 15-15-2 18-15 15z"/>
              <circle cx="130" cy="147" r="11"/><circle cx="325" cy="125" r="11"/><circle cx="86" cy="237" r="9"/><circle cx="87" cy="130" r="8"/><circle cx="92" cy="158" r="7"/><circle cx="110" cy="185" r="6"/><circle cx="187" cy="405" r="11"/><circle cx="210" cy="390" r="8"/><circle cx="208" cy="670" r="12"/><circle cx="248" cy="645" r="9"/><circle cx="130" cy="457" r="10"/><circle cx="328" cy="475" r="11"/><circle cx="372" cy="453" r="17"/><circle cx="427" cy="137" r="11"/><circle cx="205" cy="557" r="7"/><circle cx="140" cy="550" r="7"/><circle cx="170" cy="545" r="6"/><circle cx="275" cy="610" r="6"/>
            </g>
          </g>
        </pattern>
      </defs>
      <rect width="100%" height="100%" fill="url(#vines)"/>
    </svg>
    <a class="home" href="#home">الرئيسية</a>
    <div class="jump">
      <button type="button" aria-label="للأعلى"><svg viewBox="0 0 41 41"><path d="M6 35L17 10q3-5 6 0l11 25h-8l-6-16-6 16z" fill="url(#btnBlue)"/></svg></button>
      <button type="button" aria-label="للأسفل"><svg viewBox="0 0 41 41"><path d="M6 7h9l6 15 6-15h8L23 32q-3 3-5 0z" fill="url(#btnBlue)"/></svg></button>
    </div>
  </aside>
  <div class="scroll"><div class="thumb"></div></div>
</div>

<footer class="taskbar" dir="ltr">
  <svg class="apps" viewBox="0 0 735 12" aria-hidden="true">
    <path d="M262 9h18v3h-18z" fill="#3898f0"/><path d="M307 12q10-7 21 0z" fill="#28c0d8"/>
    <rect x="355" y="9" width="22" height="8" rx="3" fill="#00005c"/><rect x="404" y="9" width="22" height="8" rx="3" fill="#00005c"/><rect x="453" y="9" width="22" height="8" rx="3" fill="#00005c"/>
    <path d="M502 8h21v4h-21z" fill="#fff"/><path d="M510 11h5v1h-5z" fill="#f09090"/><path d="M552 12q10-7 20 0z" fill="#d84838"/><path d="M614 7l4 5h-8z" fill="#f8e838"/><path d="M648 11h11v1h-11z" fill="#d8a000"/>
  </svg>
  <div class="status"></div>
  <div class="tray"></div>
</footer>

<div class="stamp">
  <svg viewBox="0 0 40 40" aria-hidden="true"><use href="#hexa"/></svg>
  <div class="stamp-text"><strong>منتدى آخر الـزمـان</strong><span dir="ltr">http://czzman.com</span></div>
</div>
</body>
</html>
```
FILE: styles.css
```
* { box-sizing: border-box; }
body {
  margin: 0;
  height: 100vh;
  display: flex;
  flex-direction: column;
  overflow: hidden;
  position: relative;
  background: #e4e7f6;
  color: #000;
  font: 10px/16px "DejaVu Sans Condensed", "DejaVu Sans", sans-serif;
}
button { border: 0; background: none; padding: 0; }
p, h1 { margin: 0; }
a { color: #00007c; }
.defs { position: absolute; width: 0; height: 0; }
.g { text-anchor: middle; font-family: "Liberation Sans", "DejaVu Sans", sans-serif; direction: ltr; }
.serif { font-family: "Liberation Serif", serif; }
.bold { font-weight: bold; }
.slant { font-style: italic; }

.browser { flex: 1; min-height: 0; display: flex; flex-direction: row-reverse; }
.page {
  flex: 1;
  min-width: 0;
  overflow: hidden;
  display: flex;
  flex-direction: column;
  background: #e4e7f6;
}
.title-bar {
  height: 31px;
  flex: none;
  display: flex;
  justify-content: space-between;
  padding: 0 3px 0 0;
  border-bottom: 2px solid #cfe0f6;
  background:
    linear-gradient(#12128c, #12128c) bottom / 100% 2px no-repeat,
    repeating-linear-gradient(#a8b9d9 0 2px, #9fb0d1 2px 4px);
  color: #fff;
}
.title-bar h1 { font-size: 15px; line-height: 26px; }
.crumb { line-height: 16px; font-weight: bold; margin-left: -8px; }
.panel {
  flex: 1;
  min-height: 0;
  margin-right: 3px;
  border-top: 2px solid #b0b0b0;
  border-right: 2px solid #505050;
  padding: 10px 224px 0 99px;
  background: linear-gradient(#96b1c9, #98b3cd 15px, #a2cae4 55px, #9cc0df 87px, #9ab3dc 110px, #97a8d4 139px, #a6b1d6 167px, #c4c9d8 225px, #dcdde3 283px, #e4e7f6 283px);
  box-shadow: 3px 0 #e4e7f6;
}
.form { display: flex; flex-direction: column; align-items: flex-start; }
.field-head { align-self: stretch; display: flex; justify-content: space-between; padding-left: 16px; }
.strong, .note, .version { font-weight: bold; }
.text { height: 25px; border: 1px solid #767676; background: #fff; padding: 2px 4px; display: block; }
.short { width: 354px; max-width: 100%; }
.long { width: 435px; max-width: 100%; }
.second { margin-top: 5px; }
.pointed { position: relative; }
.pointer { position: absolute; right: -172px; top: 2px; width: 166px; height: 26px; }
.note { line-height: 14px; }

.editor {
  align-self: stretch;
  border: 2px groove #909090;
  background: #e1e1e1;
  padding: 5px 5px 3px;
}
.row { display: flex; height: 22px; align-items: center; }
.tool { width: 23px; height: 22px; flex: none; display: flex; align-items: center; justify-content: center; }
.tool svg { width: 20px; height: 20px; display: block; overflow: visible; }
.drop { width: 12px; height: 22px; flex: none; display: flex; align-items: center; justify-content: center; }
.drop svg { width: 10px; height: 20px; }
.sep { width: 6px; height: 20px; flex: none; background: linear-gradient(#c4c2b2, #c4c2b2) center / 1px 100% no-repeat; }
.push { flex: 1; }
.mode { border: 1px solid #3870c8; background: #e4ecf6; }
.wheel { width: 14px; height: 14px; border-radius: 50%; background: radial-gradient(#fff, transparent 40%), conic-gradient(#f0f, #f00, #f80, #ff0, #0f0, #0cc, #00f, #f0f); }
.negative svg { filter: invert(1); }
.faded svg { opacity: .5; }
.gray svg { filter: grayscale(1); }
.dark svg { filter: grayscale(1) invert(1); }

.pick { position: relative; height: 18px; flex: none; margin-left: 2px; background: #fff; }
.pick select { appearance: none; width: 100%; height: 18px; border: 0; margin: 0; padding: 0 4px 0 13px; background: none; color: #222; font: inherit; font-size: 11px; }
.pick::before { content: ""; position: absolute; left: 1px; top: 1px; width: 11px; height: 16px; background: #e1e1e1; }
.pick::after { content: ""; position: absolute; left: 3px; top: 8px; border: 3px solid transparent; border-top-color: #000; border-bottom: 0; }
.fonts { width: 115px; }
.short-cuts { width: 78px; }
.sizes { width: 49px; margin-left: 0; }

.work { display: flex; gap: 7px; align-items: flex-start; padding: 4px 0 0 2px; }
textarea {
  flex: 1;
  min-width: 0;
  height: 254px;
  border: 2px solid;
  border-color: #505050 #b0b0b0 #b0b0b0 #505050;
  background: #f0f5f9;
  resize: none;
  display: block;
}
fieldset { min-width: 0; margin: 0; border: 2px groove #d8d8d8; }
legend { color: #22229c; padding: 0 3px; font-size: 12px; line-height: 14px; }
.smilies { width: 90px; padding: 7px 11px 9px; }
.smilies legend { margin-right: -3px; }
.faces { display: grid; grid-template-columns: repeat(3, 16px); gap: 8px; align-items: end; }
.faces button { width: 16px; height: 16px; }
.faces .tall { height: 21px; }
.faces svg { width: 100%; height: 100%; display: block; }
.version { line-height: 16px; padding-top: 2px; }
.tags { align-self: stretch; margin: 3px 3px 0 19px; height: 60px; padding: 0 10px; }

.side {
  position: relative;
  width: 125px;
  flex: none;
  overflow: hidden;
  border-left: 1px solid #0818a0;
  background: linear-gradient(#00265a, #003a80 50%, #0054b4);
}
.side::before { content: ""; position: absolute; inset: 0; background: repeating-linear-gradient(rgba(0, 10, 50, .2) 0 1px, transparent 1px 3px); z-index: 1; }
.ornament { position: absolute; inset: 0; width: 100%; height: 100%; opacity: .55; }
.home {
  position: absolute;
  z-index: 2;
  right: 14px;
  top: -16px;
  width: 88px;
  height: 42px;
  border-radius: 7px;
  background: linear-gradient(#fff, #f0f0f0 70%, #cfcfcf);
  box-shadow: 0 1px 3px #001030;
  color: #2a62bc;
  font-size: 19px;
  font-weight: bold;
  line-height: 50px;
  text-align: center;
  text-decoration: none;
}
.jump { position: absolute; z-index: 2; right: 16px; bottom: 8px; display: flex; gap: 4px; }
.jump button { width: 41px; height: 41px; border-radius: 7px; background: linear-gradient(#fff, #e4e4e4); box-shadow: 0 1px 3px #002050; }
.jump svg { width: 41px; height: 41px; display: block; }
.scroll { width: 17px; flex: none; padding: 135px 1px 0; background: #f0f0f0; border-left: 1px solid #fff; }
.thumb { height: 118px; background: #cdcdcd; }

.taskbar { height: 12px; flex: none; display: flex; background: #1a2b30; }
.apps { width: 735px; height: 12px; flex: none; }
.status { flex: 1; background: #f1f1f1; border-top: 1px solid #b8b8b8; }
.tray { width: 48px; flex: none; }

.stamp {
  position: absolute;
  right: 5px;
  bottom: 6px;
  z-index: 3;
  width: 179px;
  height: 39px;
  padding-right: 3px;
  display: flex;
  align-items: center;
  gap: 10px;
  background: linear-gradient(to left, rgba(255, 255, 255, .9) 60%, rgba(255, 255, 255, .2));
  color: #1010e8;
}
.stamp svg { width: 34px; height: 34px; flex: none; }
.stamp-text { flex: 1; display: flex; flex-direction: column; line-height: 17px; padding-left: 4px; }
.stamp strong { font-size: 12px; white-space: nowrap; }
.stamp span { font: bold 13px/16px "Liberation Serif", serif; }
```
